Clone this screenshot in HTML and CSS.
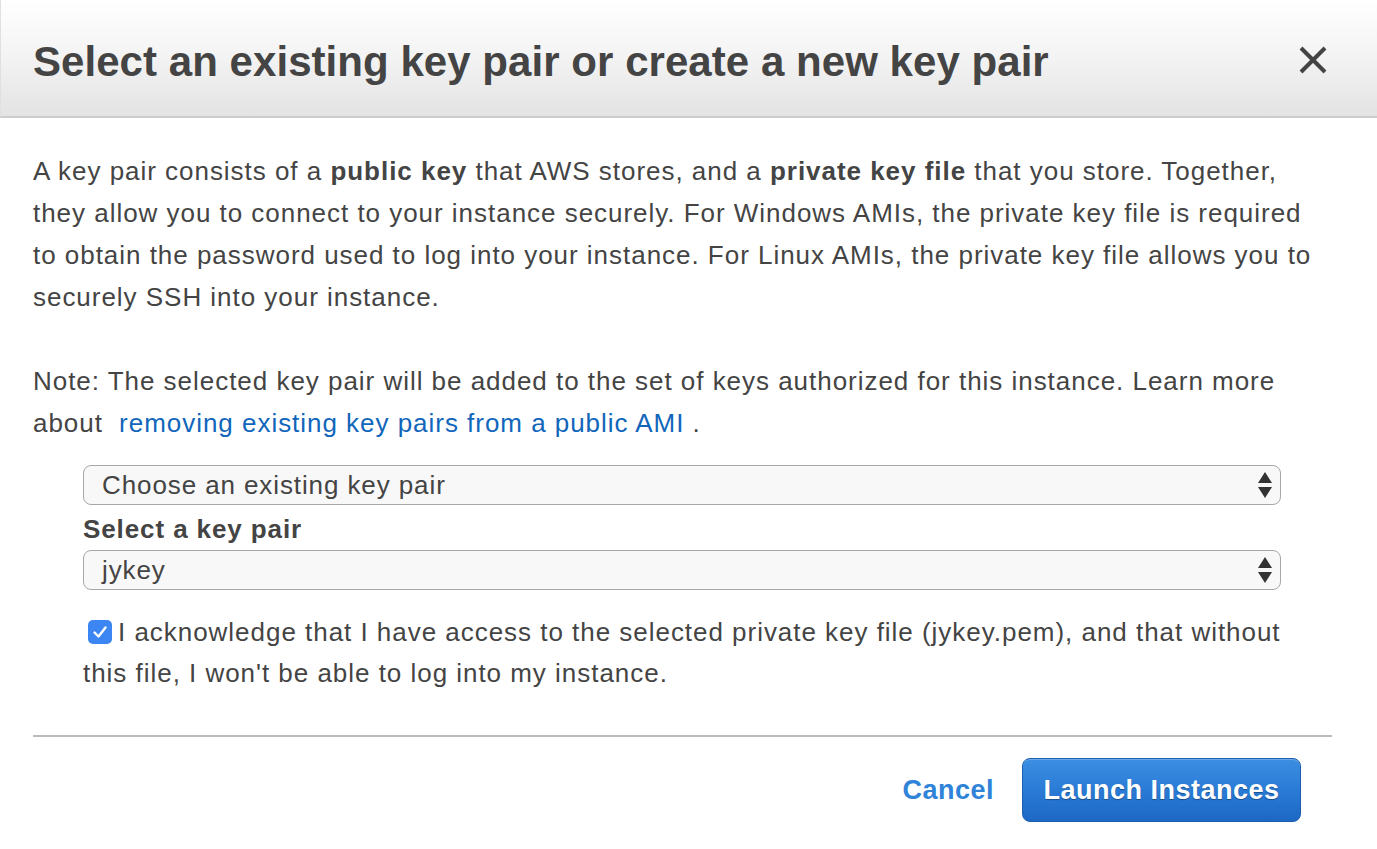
FILE: index.html
```html
<!DOCTYPE html>
<html>
<head>
<meta charset="utf-8">
<link rel="stylesheet" href="styles.css">
</head>
<body>
<div class="modal">
  <div class="header">
    <h1 class="title">Select an existing key pair or create a new key pair</h1>
    <button class="close" aria-label="Close">
      <svg width="28" height="28" viewBox="0 0 28 28"><path d="M2 2 L26 26 M26 2 L2 26" stroke="#444" stroke-width="4" stroke-linecap="butt" fill="none"/></svg>
    </button>
  </div>
  <div class="content">
    <p class="para">A key pair consists of a <b>public key</b> that AWS stores, and a <b>private key file</b> that you store. Together,<br>they allow you to connect to your instance securely. For Windows AMIs, the private key file is required<br>to obtain the password used to log into your instance. For Linux AMIs, the private key file allows you to<br>securely SSH into your instance.</p>
    <p class="para note">Note: The selected key pair will be added to the set of keys authorized for this instance. Learn more<br>about&nbsp;<a class="link" href="#">removing existing key pairs from a public AMI</a>&nbsp;.</p>
    <div class="form">
      <div class="select">
        <span class="select-text">Choose an existing key pair</span>
        <svg class="arrows" width="14" height="26" viewBox="0 0 14 26"><path d="M7 0 L14 11 L0 11 Z M0 15 L14 15 L7 26 Z" fill="#333"/></svg>
      </div>
      <div class="label">Select a key pair</div>
      <div class="select">
        <span class="select-text">jykey</span>
        <svg class="arrows" width="14" height="26" viewBox="0 0 14 26"><path d="M7 0 L14 11 L0 11 Z M0 15 L14 15 L7 26 Z" fill="#333"/></svg>
      </div>
      <p class="ack"><span class="check"><svg width="24" height="24" viewBox="0 0 24 24"><path d="M6.5 12.5 L10.5 16.5 L17.5 7.5" stroke="#fff" stroke-width="2.4" fill="none" stroke-linecap="round" stroke-linejoin="round"/></svg></span>I acknowledge that I have access to the selected private key file (jykey.pem), and that without<br>this file, I won't be able to log into my instance.</p>
    </div>
    <div class="divider"></div>
    <div class="footer">
      <a class="cancel" href="#">Cancel</a>
      <button class="launch">Launch Instances</button>
    </div>
  </div>
</div>
</body>
</html>
```
FILE: styles.css
```css
html, body {
  margin: 0;
  padding: 0;
  background: #fff;
}
body {
  font-family: "Liberation Sans", Helvetica, Arial, sans-serif;
  color: #444;
}
.header {
  height: 116px;
  border-bottom: 2px solid #cccccc;
  background: linear-gradient(to bottom, #ffffff 0%, #f3f3f3 50%, #e3e3e3 100%);
  display: flex;
  align-items: center;
  justify-content: space-between;
  padding: 0 50px 0 32px;
  border-left: 1px solid #e0e0e0;
}
.title {
  margin: 0;
  font-size: 42px;
  font-weight: bold;
  color: #444;
  letter-spacing: 0.05px;
  padding-top: 7px;
  white-space: nowrap;
}
.close {
  border: 0;
  background: transparent;
  padding: 0;
  width: 28px;
  height: 28px;
  display: flex;
  margin-top: 4px;
}
.content {
  padding: 32px 45px 0 33px;
}
.para {
  margin: 0 0 42px 0;
  font-size: 26px;
  letter-spacing: 0.97px;
  line-height: 42px;
  white-space: nowrap;
}
.note {
  margin-bottom: 21px;
}
.link {
  color: #1166bb;
  text-decoration: none;
  margin-left: 8px;
}
.form {
  margin: 0 51px 0 50px;
}
.select {
  height: 38px;
  border: 1px solid #a8a8a8;
  border-radius: 8px;
  background: #f8f8f8;
  display: flex;
  align-items: center;
  justify-content: space-between;
  padding: 0 8px 0 18px;
  font-size: 26px;
  letter-spacing: 0.9px;
}
.arrows {
  display: block;
}
.label {
  font-size: 26px;
  letter-spacing: 0.9px;
  font-weight: bold;
  padding-top: 4px;
  line-height: 41px;
}
.ack {
  margin: 22px 0 0 0;
  font-size: 26px;
  letter-spacing: 0.97px;
  line-height: 41px;
  white-space: nowrap;
}
.check {
  display: inline-block;
  width: 24px;
  height: 24px;
  border-radius: 5px;
  background: #3b86f2;
  vertical-align: -3px;
  margin: 0 6px 0 5px;
}
.check svg {
  display: block;
}
.divider {
  height: 2px;
  background: #bbbbbb;
  margin-top: 41px;
}
.footer {
  display: flex;
  justify-content: flex-end;
  align-items: center;
  gap: 28px;
  padding: 21px 31px 0 0;
}
.cancel {
  font-size: 27px;
  letter-spacing: 0.5px;
  font-weight: bold;
  color: #2f83d9;
  text-decoration: none;
}
.launch {
  height: 64px;
  width: 279px;
  border: 1px solid #1c5fae;
  border-radius: 8px;
  background: linear-gradient(to bottom, #3b8ee2 0%, #2a7bd6 50%, #1c68c4 100%);
  color: #fff;
  font-family: "Liberation Sans", Helvetica, Arial, sans-serif;
  font-size: 27px;
  letter-spacing: 0.5px;
  font-weight: bold;
  text-shadow: 0 1px 1px rgba(0,0,0,0.35);
  box-shadow: inset 0 1px 0 rgba(255,255,255,0.25);
  padding: 0;
}
```
